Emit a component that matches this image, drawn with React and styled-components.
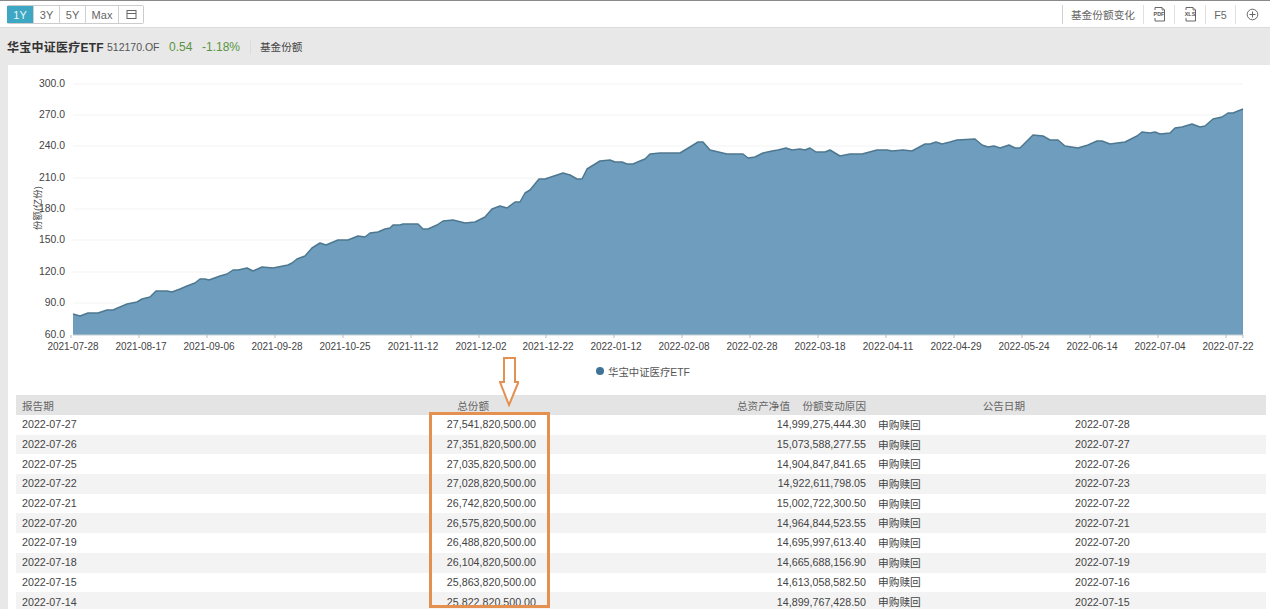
import React from 'react';
import styled, { createGlobalStyle } from 'styled-components';

const Global = createGlobalStyle`
  html, body { margin: 0; padding: 0; overflow: hidden; background: #fff; }
  body { font-family: "Liberation Sans", "Noto Sans CJK SC", sans-serif; color: #444; }
`;

const Page = styled.div`
  width: 1270px;
  height: 609px;
  overflow: hidden;
  background: #e8e8e8;
`;

const Toolbar = styled.div`
  height: 28px;
  box-sizing: border-box;
  border-top: 1px solid #8a8a8a;
  border-bottom: 1px solid #dcdcdc;
  background: #fff;
  padding: 4px 1px 0 7px;
  display: flex;
  justify-content: space-between;
  align-items: flex-start;
`;

const RangeGroup = styled.div`
  display: flex;
  height: 19px;
  border: 1px solid #ccc;
  border-left: 0;
  border-radius: 2px;
  box-sizing: border-box;
`;

const RangeButton = styled.div`
  width: ${(p) => p.$w}px;
  box-sizing: border-box;
  display: flex;
  align-items: center;
  justify-content: center;
  font-size: 11px;
  color: ${(p) => (p.$active ? '#e8f6fa' : '#666')};
  background: ${(p) => (p.$active ? '#3ea8c4' : '#fff')};
  border-right: 1px solid #d0d0d0;
  &:last-child { border-right: 0; }
`;

const ToolGroup = styled.div`
  display: flex;
  height: 19px;
  border-left: 1px solid #cfcfcf;
`;

const ToolItem = styled.div`
  width: ${(p) => p.$w}px;
  box-sizing: border-box;
  display: flex;
  align-items: center;
  justify-content: center;
  font-size: 10.7px;
  color: #666;
  border-right: 1px solid #e0e0e0;
  &:last-child { border-right: 0; }
`;

const InfoBar = styled.div`
  height: 37px;
  padding: 0 0 0 7px;
  display: flex;
  align-items: center;
  font-size: 12px;
`;

const FundName = styled.span`
  font-weight: bold;
  font-size: 12px;
  letter-spacing: 0.25px;
  color: #333;
  width: 100px;
  white-space: nowrap;
`;

const FundCode = styled.span`
  font-size: 10.5px;
  color: #555;
  width: 62px;
`;

const Change = styled.span`
  color: #5a9440;
  width: ${(p) => p.$w}px;
`;

const ShareTag = styled.span`
  font-size: 10.6px;
  color: #444;
  border-left: 1px solid #dcdcdc;
  padding-left: 9px;
  line-height: 14px;
`;

const Panel = styled.div`
  margin-left: 8px;
  background: #fff;
  height: 544px;
  box-sizing: border-box;
`;

const Chart = styled.svg`
  display: block;
  width: 1262px;
  height: 294px;
`;

const Legend = styled.div`
  height: 24px;
  display: flex;
  align-items: center;
  padding-left: 588px;
  gap: 4px;
  font-size: 10.4px;
  color: #555;
`;

const LegendDot = styled.span`
  width: 8px;
  height: 8px;
  border-radius: 50%;
  background: #3f7396;
`;

const TableArea = styled.div`
  position: relative;
  margin: 12px 4px 0 8px;
`;

const HeadRow = styled.div`
  display: grid;
  grid-template-columns: 100px 373px 301px 76px 159px;
  height: 20px;
  align-items: center;
  background: #e4e4e4;
  font-size: 10.6px;
  color: #666;
`;

const HeadCell = styled.div`
  text-align: ${(p) => (p.$left ? 'left' : 'right')};
  padding-left: ${(p) => (p.$left ? '6px' : '0')};
`;

const Row = styled.div`
  display: grid;
  grid-template-columns: 300px 220px 330px 209px 1fr;
  height: 19.7px;
  box-sizing: border-box;
  padding-bottom: 1px;
  align-items: center;
  font-size: 10.7px;
  color: #444;
  background: ${(p) => (p.$odd ? '#f3f3f3' : '#fff')};
`;

const DateCell = styled.div`
  padding-left: 6px;
`;

const Num = styled.div`
  text-align: right;
`;

const Reason = styled.div`
  padding-left: 12px;
`;

const OrangeBox = styled.div`
  position: absolute;
  left: 413px;
  top: 17px;
  width: 121px;
  height: 196px;
  box-sizing: border-box;
  border: 3px solid #e39050;
`;

const Arrow = styled.svg`
  position: absolute;
  left: 483px;
  top: -38px;
  width: 20px;
  height: 50px;
`;

const DocIcon = ({ label }) => (
  <svg width="15" height="17" viewBox="0 0 15 17">
    <path d="M3 4V1.5h7l2.5 2.5v11H3V12" fill="none" stroke="#666" strokeWidth="1" />
    <path d="M10 1.5V4h2.5" fill="none" stroke="#666" strokeWidth="0.8" />
    <text x="7" y="10.2" textAnchor="middle" fontSize="5.4" fontWeight="bold" fill="#555" fontFamily="Liberation Sans">{label}</text>
  </svg>
);

const CalendarIcon = () => (
  <svg width="11" height="11" viewBox="0 0 11 11">
    <rect x="1" y="1.5" width="9" height="8" fill="none" stroke="#666" />
    <path d="M1 4.5h9" stroke="#666" />
  </svg>
);

const PlusIcon = () => (
  <svg width="13" height="13" viewBox="0 0 13 13">
    <circle cx="6.5" cy="6.5" r="5.3" fill="none" stroke="#666" />
    <path d="M6.5 3.5v6M3.5 6.5h6" stroke="#666" />
  </svg>
);

const curve = [
  [73,314],[80,316],[88,313],[98,313],[107,310],[113,310],[127,304],[137,302],[142,299],[150,297],[156,291],[167,291],[172,292],[180,289],[187,286],[195,283],[200,279],[205,279],[209,280],[220,276],[227,274],[233,270],[238,270],[247,268],[253,271],[262,267],[273,268],[288,265],[292,263],[297,259],[305,256],[312,248],[320,243],[326,245],[338,240],
  [348,240],[358,236],[365,237],[370,233],[378,232],[385,229],[390,228],[393,225],[400,225],[403,224],[418,224],[423,229],[428,229],[437,225],[443,221],[453,220],[465,223],[475,222],[485,217],[492,209],[500,206],[507,208],[515,202],[520,202],[525,193],[530,190],[539,179],[545,179],[563,173],[570,175],[577,179],[582,179],[587,169],[600,161],[610,160],[615,162],[622,162],[627,164],[633,164],[640,161],[645,159],[650,154],[660,153],
  [680,153],[690,147],[698,142],[703,142],[710,150],[727,154],[743,154],[748,158],[755,157],[763,153],[772,151],[778,150],[786,148],[792,150],[800,149],[805,150],[810,148],[816,152],[825,152],[830,150],[840,156],[850,154],[862,154],[877,150],[887,150],[892,151],[903,150],[912,151],[925,144],[930,144],[936,142],[942,144],[950,142],[957,140],[975,139],
  [982,145],[988,147],[994,146],[1000,148],[1009,145],[1015,148],[1020,148],[1033,135],[1043,136],[1050,140],[1058,140],[1065,146],[1078,148],[1088,145],[1097,141],[1102,141],[1110,144],[1125,142],[1137,136],[1142,132],[1150,133],[1155,132],[1160,134],[1170,133],[1175,128],[1182,127],[1192,124],[1200,127],[1205,126],[1213,119],[1222,117],[1228,113],[1233,113],[1243,109],
];

// svg starts at page x=8, y=65
const line = curve.map(([x, y]) => `${x - 8},${y - 65}`).join(' ');
const areaPts = `65,270 ${line} 1235,270`;

const yTicks = [
  ['300.0', 84], ['270.0', 115], ['240.0', 146], ['210.0', 178], ['180.0', 209],
  ['150.0', 240], ['120.0', 272], ['90.0', 303], ['60.0', 335],
];

const xTicks = [
  ['2021-07-28', 73], ['2021-08-17', 141], ['2021-09-06', 209], ['2021-09-28', 277],
  ['2021-10-25', 345], ['2021-11-12', 413], ['2021-12-02', 481], ['2021-12-22', 548],
  ['2022-01-12', 616], ['2022-02-08', 684], ['2022-02-28', 752], ['2022-03-18', 820],
  ['2022-04-11', 888], ['2022-04-29', 956], ['2022-05-24', 1024], ['2022-06-14', 1092],
  ['2022-07-04', 1160], ['2022-07-22', 1228],
];

const rows = [
  ['2022-07-27', '27,541,820,500.00', '14,999,275,444.30', '2022-07-28'],
  ['2022-07-26', '27,351,820,500.00', '15,073,588,277.55', '2022-07-27'],
  ['2022-07-25', '27,035,820,500.00', '14,904,847,841.65', '2022-07-26'],
  ['2022-07-22', '27,028,820,500.00', '14,922,611,798.05', '2022-07-23'],
  ['2022-07-21', '26,742,820,500.00', '15,002,722,300.50', '2022-07-22'],
  ['2022-07-20', '26,575,820,500.00', '14,964,844,523.55', '2022-07-21'],
  ['2022-07-19', '26,488,820,500.00', '14,695,997,613.40', '2022-07-20'],
  ['2022-07-18', '26,104,820,500.00', '14,665,688,156.90', '2022-07-19'],
  ['2022-07-15', '25,863,820,500.00', '14,613,058,582.50', '2022-07-16'],
  ['2022-07-14', '25,822,820,500.00', '14,899,767,428.50', '2022-07-15'],
];

const App = () => (
  <Page>
    <Global />
    <Toolbar>
      <RangeGroup>
        <RangeButton $w={27} $active>1Y</RangeButton>
        <RangeButton $w={26}>3Y</RangeButton>
        <RangeButton $w={26}>5Y</RangeButton>
        <RangeButton $w={33}>Max</RangeButton>
        <RangeButton $w={24}><CalendarIcon /></RangeButton>
      </RangeGroup>
      <ToolGroup>
        <ToolItem $w={81}>基金份额变化</ToolItem>
        <ToolItem $w={31}><DocIcon label="PDF" /></ToolItem>
        <ToolItem $w={31}><DocIcon label="XLS" /></ToolItem>
        <ToolItem $w={30}>F5</ToolItem>
        <ToolItem $w={33}><PlusIcon /></ToolItem>
      </ToolGroup>
    </Toolbar>
    <InfoBar>
      <FundName>华宝中证医疗ETF</FundName>
      <FundCode>512170.OF</FundCode>
      <Change $w={33}>0.54</Change>
      <Change $w={48}>-1.18%</Change>
      <ShareTag>基金份额</ShareTag>
    </InfoBar>
    <Panel>
      <Chart viewBox="0 0 1262 294">
        {yTicks.slice(0, -1).map(([, y]) => (
          <line key={y} x1="65" x2="1235" y1={y - 65} y2={y - 65} stroke="#f3f3f3" />
        ))}
        <polygon points={areaPts} fill="#6f9dbd" />
        <polyline points={line} fill="none" stroke="#4d7890" strokeWidth="1.5" strokeLinejoin="round" />
        <line x1="65" x2="1235" y1="270" y2="270" stroke="#c4ced6" />
        {yTicks.map(([t, y]) => (
          <text key={t} x="57" y={y - 62} textAnchor="end" fontSize="10.4" fill="#444">{t}</text>
        ))}
        {xTicks.map(([t, x]) => (
          <g key={t}>
            <line x1={x - 10} x2={x - 10} y1="270" y2="273" stroke="#bbb" />
            <text x={x - 8} y="284.5" textAnchor="middle" fontSize="10" fill="#444">{t}</text>
          </g>
        ))}
        <line x1="1235" x2="1235" y1="270" y2="273" stroke="#bbb" />
        <text transform="translate(33 143) rotate(-90)" textAnchor="middle" fontSize="9.4" fill="#444">份额(亿份)</text>
      </Chart>
      <Legend>
        <LegendDot />
        <span>华宝中证医疗ETF</span>
      </Legend>
      <TableArea>
        <HeadRow>
          <HeadCell $left>报告期</HeadCell>
          <HeadCell>总份额</HeadCell>
          <HeadCell>总资产净值</HeadCell>
          <HeadCell>份额变动原因</HeadCell>
          <HeadCell>公告日期</HeadCell>
        </HeadRow>
        {rows.map((r, i) => (
          <Row key={r[0]} $odd={i % 2 === 1}>
            <DateCell>{r[0]}</DateCell>
            <Num>{r[1]}</Num>
            <Num>{r[2]}</Num>
            <Reason>申购赎回</Reason>
            <div>{r[3]}</div>
          </Row>
        ))}
        <OrangeBox />
        <Arrow viewBox="0 0 20 50">
          <path d="M5 1h11v24h3.5L10 48 1 25h4z" fill="#fff" stroke="#e39050" strokeWidth="2" />
        </Arrow>
      </TableArea>
    </Panel>
  </Page>
);

export default App;
